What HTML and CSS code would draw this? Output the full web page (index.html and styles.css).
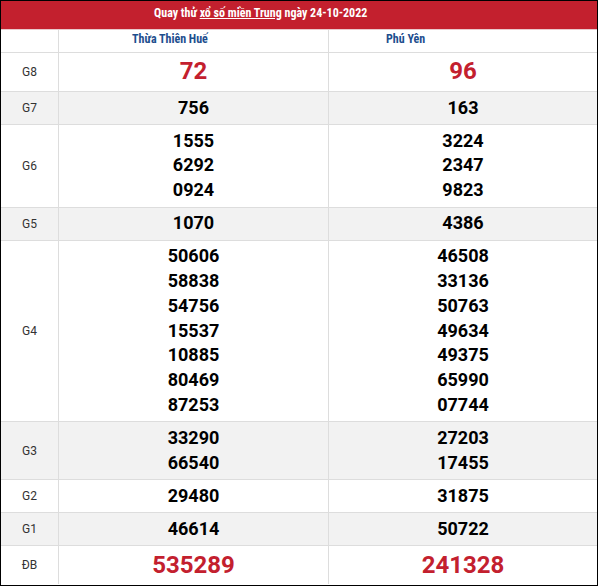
FILE: index.html
```html
<!DOCTYPE html>
<html lang="vi">
<head>
<meta charset="utf-8">
<title>Quay thử xổ số miền Trung ngày 24-10-2022</title>
<link rel="stylesheet" href="styles.css">
</head>
<body>
<div class="board">
  <div class="title">Quay thử <a href="#" class="title-link">xổ số miền Trung</a> ngày 24-10-2022</div>
  <div class="row head">
    <div class="cell label"></div>
    <div class="cell prov prov-1">Thừa Thiên Huế</div>
    <div class="cell prov prov-2">Phú Yên</div>
  </div>
  <div class="row big">
    <div class="cell label">G8</div>
    <div class="cell num red">72</div>
    <div class="cell num red">96</div>
  </div>
  <div class="row alt">
    <div class="cell label">G7</div>
    <div class="cell num">756</div>
    <div class="cell num">163</div>
  </div>
  <div class="row">
    <div class="cell label">G6</div>
    <div class="cell num"><div>1555</div><div>6292</div><div>0924</div></div>
    <div class="cell num"><div>3224</div><div>2347</div><div>9823</div></div>
  </div>
  <div class="row alt">
    <div class="cell label">G5</div>
    <div class="cell num">1070</div>
    <div class="cell num">4386</div>
  </div>
  <div class="row">
    <div class="cell label">G4</div>
    <div class="cell num"><div>50606</div><div>58838</div><div>54756</div><div>15537</div><div>10885</div><div>80469</div><div>87253</div></div>
    <div class="cell num"><div>46508</div><div>33136</div><div>50763</div><div>49634</div><div>49375</div><div>65990</div><div>07744</div></div>
  </div>
  <div class="row alt">
    <div class="cell label">G3</div>
    <div class="cell num"><div>33290</div><div>66540</div></div>
    <div class="cell num"><div>27203</div><div>17455</div></div>
  </div>
  <div class="row">
    <div class="cell label">G2</div>
    <div class="cell num">29480</div>
    <div class="cell num">31875</div>
  </div>
  <div class="row alt">
    <div class="cell label">G1</div>
    <div class="cell num">46614</div>
    <div class="cell num">50722</div>
  </div>
  <div class="row big last">
    <div class="cell label">ĐB</div>
    <div class="cell num red db">535289</div>
    <div class="cell num red db">241328</div>
  </div>
</div>
</body>
</html>
```
FILE: styles.css
```css
* { box-sizing: border-box; }
html, body { margin: 0; padding: 0; background: #fff; }
body { font-family: Roboto, "Liberation Sans", sans-serif; }

.board {
  width: 598px;
  height: 586px;
  border: 1px solid #000;
  overflow: hidden;
}

.title {
  background: #c3202e;
  color: #fff;
  font-weight: 700;
  font-size: 12px;
  font-stretch: 75%;
  line-height: 24px;
  height: 29px;
  padding: 0 0 4px 153px;
  border-bottom: 1px solid #e9c9cc;
}
.title-link { color: #fff; text-decoration: underline; }

.row {
  display: grid;
  grid-template-columns: 58px 270px 1fr;
  border-bottom: 1px solid #ddd;
}
.row.last { border-bottom: 0; }
.row.alt { background: #f2f2f2; }

.cell { border-right: 1px solid #ddd; }
.cell:last-child { border-right: 0; }

.label {
  display: flex;
  align-items: center;
  justify-content: center;
  font-size: 12px;
  color: #333;
}

.head { height: 23px; }
.prov {
  color: #1d4e8e;
  font-weight: 700;
  font-size: 12px;
  font-stretch: 75%;
  line-height: 19px;
  padding-bottom: 3px;
}
.prov-1 { padding-left: 73px; }
.prov-2 { padding-left: 57px; }

.num {
  text-align: center;
  font-weight: 700;
  font-size: 18px;
  line-height: 24.8px;
  color: #000;
  padding: 3.6px 0 3.6px;
}
.big .num {
  font-size: 24px;
  line-height: 36px;
  padding: 0 0 2px;
}
.big .num.db {
  line-height: 37px;
  padding: 1px 0 0;
}
.red { color: #c3202e; }
```
